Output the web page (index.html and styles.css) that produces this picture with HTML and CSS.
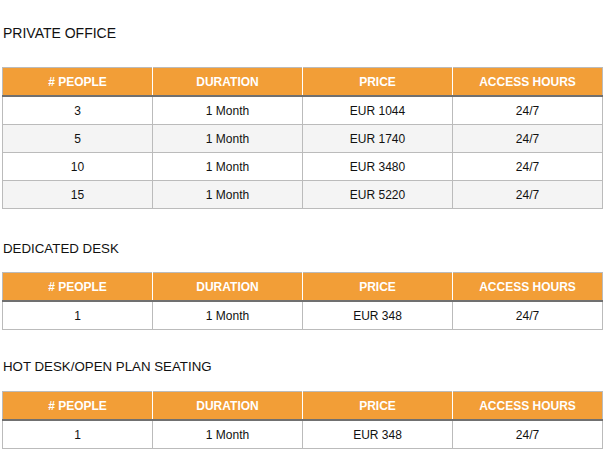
FILE: index.html
```html
<!DOCTYPE html>
<html>
<head>
<meta charset="utf-8">
<link rel="stylesheet" href="styles.css">
</head>
<body>
<div class="page">
  <section class="plan plan-first">
    <h2 class="plan-title">PRIVATE OFFICE</h2>
    <table class="rates">
      <thead>
        <tr><th># PEOPLE</th><th>DURATION</th><th>PRICE</th><th>ACCESS HOURS</th></tr>
      </thead>
      <tbody>
        <tr><td>3</td><td>1 Month</td><td>EUR 1044</td><td>24/7</td></tr>
        <tr><td>5</td><td>1 Month</td><td>EUR 1740</td><td>24/7</td></tr>
        <tr><td>10</td><td>1 Month</td><td>EUR 3480</td><td>24/7</td></tr>
        <tr><td>15</td><td>1 Month</td><td>EUR 5220</td><td>24/7</td></tr>
      </tbody>
    </table>
  </section>
  <section class="plan">
    <h2 class="plan-title">DEDICATED DESK</h2>
    <table class="rates">
      <thead>
        <tr><th># PEOPLE</th><th>DURATION</th><th>PRICE</th><th>ACCESS HOURS</th></tr>
      </thead>
      <tbody>
        <tr><td>1</td><td>1 Month</td><td>EUR 348</td><td>24/7</td></tr>
      </tbody>
    </table>
  </section>
  <section class="plan">
    <h2 class="plan-title plan-title-tight">HOT DESK/OPEN PLAN SEATING</h2>
    <table class="rates">
      <thead>
        <tr><th># PEOPLE</th><th>DURATION</th><th>PRICE</th><th>ACCESS HOURS</th></tr>
      </thead>
      <tbody>
        <tr><td>1</td><td>1 Month</td><td>EUR 348</td><td>24/7</td></tr>
      </tbody>
    </table>
  </section>
</div>
</body>
</html>
```
FILE: styles.css
```css
html, body {
  margin: 0;
  padding: 0;
  background: #ffffff;
}
body {
  font-family: "Liberation Sans", Arial, Helvetica, sans-serif;
  color: #111111;
}
.page {
  padding: 25px 0 0 2px;
}
.plan {
  margin-bottom: 29px;
}
.plan-title {
  margin: 0 0 15px 1px;
  font-size: 13.3px;
  line-height: 17px;
  font-weight: normal;
  color: #111111;
}
.plan-title-tight {
  margin-top: -1px;
  margin-bottom: 16px;
}
.plan-first {
  margin-bottom: 31px;
}
.plan-first .plan-title {
  margin-bottom: 25px;
  font-size: 14px;
}
.rates {
  width: 601px;
  table-layout: fixed;
  border-collapse: collapse;
  border: 1px solid #bbbbbb;
}
.rates th {
  background: #f29e37;
  color: #ffffff;
  font-size: 12px;
  font-weight: bold;
  height: 27px;
  padding: 0;
  text-align: center;
  border-right: 1px solid #ffffff;
  border-bottom: 2px solid #707070;
}
.rates th:last-child {
  border-right: 1px solid #bbbbbb;
}
.rates td {
  font-size: 12px;
  height: 27px;
  padding: 0;
  text-align: center;
  border: 1px solid #bbbbbb;
}
.rates tbody tr:nth-child(even) td {
  background: #f4f4f4;
}
```
